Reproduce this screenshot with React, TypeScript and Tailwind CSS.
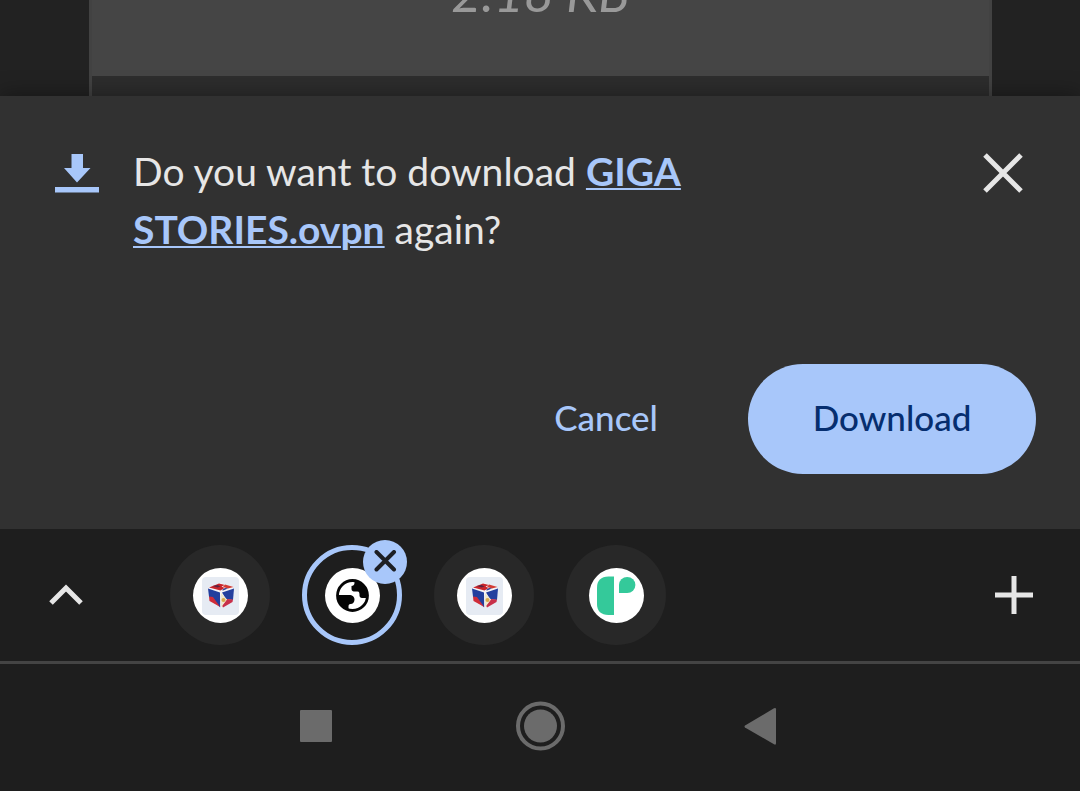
import type { ReactNode } from 'react';

function DownloadIcon() {
  return (
    <svg viewBox="0 0 44 40" className="h-10 w-11 shrink-0" fill="#a8c7fa" aria-hidden="true">
      <path d="M16.5 0h11.5v14h7.5L22 28.5 9 14h7.5z" />
      <path d="M0 33h44v5.500H0z" />
    </svg>
  );
}

function CubeIcon() {
  return (
    <svg viewBox="0 0 56 56" className="h-14 w-14" aria-hidden="true">
      <circle cx="28.500" cy="28.500" r="27.500" fill="#fff" />
      <rect x="10" y="10" width="37" height="38" rx="4" fill="#e6ebf3" />
      <path d="M16.500 20.500L28 16l13 4-1.500 14L29 41l-11-6.500z" fill="#f7f5f7" />
      <path d="M17 20.500l10-4 6 1.500-3.500 1.500 3 1.500-4 2.500z" fill="#c9252c" />
      <path d="M20.500 19l5-1 3 1.500-3 1z" fill="#5c2342" />
      <path d="M33 17.500l8.500 2.500-5.500 1.500-5-1.500z" fill="#d23c35" />
      <path d="M30 23l3-2 3 .5-5 2z" fill="#2b3a8f" />
      <path d="M16 21.500l12 4 .2 15L17 29.500z" fill="#233f9e" />
      <path d="M17 29.500l4 .5 7.200 10-10.700-6z" fill="#cf2c39" />
      <path d="M42 21.500L41 33l-7-1-4-6.500z" fill="#233f9e" />
      <path d="M41 32.500l-.5 2.500-9.500 5.500-1-2 5-6.500z" fill="#c8304a" />
      <path d="M29 26l6 6.500-6 8z" fill="#f0e8cf" />
      <circle cx="31.500" cy="33" r="2" fill="#d9a94d" />
    </svg>
  );
}

function GlobeIcon() {
  return (
    <svg viewBox="0 0 56 56" className="h-14 w-14" aria-hidden="true">
      <circle cx="28.500" cy="28.500" r="27.500" fill="#fff" />
      <circle cx="28.500" cy="28.500" r="15" fill="#fff" stroke="#050505" strokeWidth="2.800" />
      <path
        d="M30.500 13.500V16c0 2-1.500 3-3 3v3c0 2 1.500 2.500 3.500 2.500h2.500c2 0 2 2 2 4 0 1.500 1 2.500 2.500 2.500h5c2-9-4-17-12.500-17.500z"
        fill="#050505"
      />
      <path
        d="M13.500 28H25c3.500 0 5.500 2 5.500 4.500S29 37 26.500 37c-1.500 0-2 1-2 2.500v3.500c-7-1.500-11-8-11-15z"
        fill="#050505"
      />
    </svg>
  );
}

function LeafIcon() {
  return (
    <svg viewBox="0 0 56 56" className="h-14 w-14" aria-hidden="true">
      <circle cx="28.500" cy="28.500" r="27.500" fill="#fff" />
      <path d="M26 9.500V48h-5.500C13 48 9 44 9 37V20.500c0-7 4-11 11.500-11z" fill="#34c99a" />
      <path d="M31 26v-8a8.200 8 0 1 1 8.200 8z" fill="#34c99a" />
    </svg>
  );
}

type TabProps = {
  label: string;
  active?: boolean;
  children: ReactNode;
};

function Tab({ label, active, children }: TabProps) {
  return (
    <div className="relative">
      <button
        type="button"
        aria-label={label}
        className={
          active
            ? 'flex h-25 w-25 items-center justify-center rounded-full border-5 border-[#a8c7fa]'
            : 'flex h-25 w-25 items-center justify-center rounded-full bg-[#282828]'
        }
      >
        {children}
      </button>
      {active && (
        <button
          type="button"
          aria-label="Close tab"
          className="absolute -top-[5px] -right-[5px] flex h-11 w-11 items-center justify-center rounded-full bg-[#a8c7fa]"
        >
          <svg viewBox="0 0 24 24" className="h-6 w-6" stroke="#1d1f24" strokeWidth="4" strokeLinecap="round">
            <path d="M3.500 2l17.500 17.500M21 2L3.500 19.500" />
          </svg>
        </button>
      )}
    </div>
  );
}

export default function App() {
  return (
    <div className="flex min-h-screen flex-col overflow-hidden bg-[#1e1e1e] font-['Lato','Open_Sans',sans-serif]">
      {/* page behind the sheet */}
      <div className="h-24 bg-[#222222] pr-22 pl-[89px]">
        <div className="flex h-full flex-col border-x-3 border-[#424242] bg-[#2d2d2d]">
          <div className="flex h-19 items-end justify-center overflow-hidden bg-[#454545] pb-13">
            <p className="text-[52px] leading-[64px] text-[#999999] italic">2.18 KB</p>
          </div>
        </div>
      </div>

      <section className="relative bg-[#313131] pt-[46px] pr-11 pb-[55px] pl-[55px] shadow-[0_-2px_20px_rgba(0,0,0,0.35)]">
        <div className="flex items-start">
          <div className="pt-3">
            <DownloadIcon />
          </div>
          <p className="ml-[34px] w-[600px] text-[39px] leading-[58px] text-[#e6e6e6]">
            Do you want to download{' '}
            <a href="#" className="font-bold text-[#a8c7fa] underline decoration-2 underline-offset-2">
              GIGA STORIES.ovpn
            </a>{' '}
            again?
          </p>
          <button type="button" aria-label="Close" className="mt-[11px] mr-[13px] ml-auto">
            <svg viewBox="0 0 40 40" className="h-10 w-10" stroke="#e6e6e6" strokeWidth="5">
              <path d="M2 2l36 36M38 2L2 38" />
            </svg>
          </button>
        </div>

        <div className="mt-[106px] flex items-center justify-end gap-[26px] font-medium">
          <button type="button" className="h-[110px] px-16 pb-1 text-[35px] text-[#a8c7fa]">
            Cancel
          </button>
          <button type="button" className="h-[110px] w-72 rounded-full bg-[#a8c7fa] pb-1 text-[35px] text-[#062e6f]">
            Download
          </button>
        </div>
      </section>

      <div className="relative flex h-[135px] items-center border-b-3 border-[#444444] bg-[#1e1e1e] pr-[46px] pl-[49px]">
        <button type="button" aria-label="Expand tabs">
          <svg viewBox="0 0 34 24" className="h-6 w-[34px]" fill="none" stroke="#e6e6e6" strokeWidth="5">
            <path d="M2 20L17 5l15 15" />
          </svg>
        </button>
        <div className="ml-[87px] flex gap-8">
          <Tab label="Tab 1">
            <CubeIcon />
          </Tab>
          <Tab label="Tab 2" active>
            <GlobeIcon />
          </Tab>
          <Tab label="Tab 3">
            <CubeIcon />
          </Tab>
          <Tab label="Tab 4">
            <LeafIcon />
          </Tab>
        </div>
        <button type="button" aria-label="New tab" className="ml-auto">
          <svg viewBox="0 0 40 40" className="h-10 w-10" stroke="#e6e6e6" strokeWidth="5">
            <path d="M20 1v38M1 20h38" />
          </svg>
        </button>
      </div>

      {/* system navigation */}
      <nav className="flex flex-1 items-center justify-center gap-[174px] pb-1">
        <button type="button" aria-label="Recent apps">
          <svg viewBox="0 0 50 50" className="h-[50px] w-[50px]" fill="#6b6b6b">
            <rect x="9" y="9" width="32" height="32" rx="1" />
          </svg>
        </button>
        <button type="button" aria-label="Home">
          <svg viewBox="0 0 50 50" className="h-[50px] w-[50px]" fill="#6b6b6b">
            <circle cx="25.500" cy="25" r="22.500" fill="none" stroke="#6b6b6b" strokeWidth="4" />
            <circle cx="25.500" cy="25" r="16.500" />
          </svg>
        </button>
        <button type="button" aria-label="Back">
          <svg viewBox="0 0 50 50" className="h-[50px] w-[50px]" fill="#6b6b6b">
            <path d="M6 24.500L35 7.300q2-1 2 1v34q0 2-2 1L6 26.500q-1-1 0-2z" />
          </svg>
        </button>
      </nav>
    </div>
  );
}
